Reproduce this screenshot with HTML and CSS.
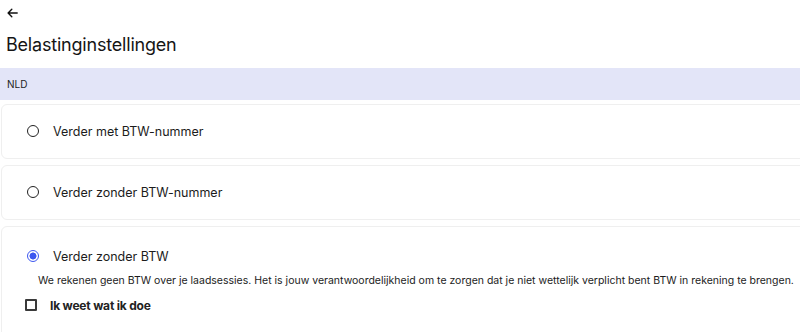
FILE: index.html
```html
<!DOCTYPE html>
<html lang="nl">
<head>
<meta charset="utf-8">
<title>Belastinginstellingen</title>
<link rel="stylesheet" href="styles.css">
</head>
<body>
<header class="header">
  <button class="back" aria-label="Terug">
    <svg width="11" height="10" viewBox="0 0 11 10" fill="none" stroke="#111" stroke-width="1.4" stroke-linecap="round" stroke-linejoin="round">
      <path d="M10.2 5H1.2M4.8 1.3L1.1 5 4.8 8.7"/>
    </svg>
  </button>
  <h1 class="title">Belastinginstellingen</h1>
</header>
<div class="country">NLD</div>
<div class="options">
  <div class="card">
    <label class="option">
      <span class="radio"></span>
      <span class="option-label">Verder met BTW-nummer</span>
    </label>
  </div>
  <div class="card">
    <label class="option">
      <span class="radio"></span>
      <span class="option-label">Verder zonder BTW-nummer</span>
    </label>
  </div>
  <div class="card card-open">
    <label class="option">
      <span class="radio radio-on"></span>
      <span class="option-label">Verder zonder BTW</span>
    </label>
    <p class="note">We rekenen geen BTW over je laadsessies. Het is jouw verantwoordelijkheid om te zorgen dat je niet wettelijk verplicht bent BTW in rekening te brengen.</p>
    <label class="check">
      <span class="box"></span>
      <span class="check-label">Ik weet wat ik doe</span>
    </label>
  </div>
</div>
</body>
</html>
```
FILE: styles.css
```css
html, body {
  margin: 0;
  padding: 0;
  background: #ffffff;
  overflow: hidden;
}
body {
  font-family: Inter, "Noto Sans", sans-serif;
  color: #1c1c1c;
  width: 800px;
}
.header {
  display: flex;
  flex-direction: column;
  align-items: flex-start;
}
.back {
  border: 0;
  background: none;
  padding: 0;
  margin: 8px 0 0 7px;
  width: 11px;
  height: 10px;
  display: flex;
}
.title {
  margin: 15px 0 0 6px;
  font-size: 18px;
  font-weight: 400;
  letter-spacing: -0.2px;
  line-height: 24px;
  color: #151515;
}
.country {
  margin-top: 11px;
  height: 32px;
  background: #e3e5f8;
  display: flex;
  align-items: center;
  padding-left: 7px;
  font-size: 10px;
  color: #222;
}
.options {
  display: flex;
  flex-direction: column;
  gap: 6px;
  margin: 4px -10px 0 1px;
}
.card {
  border: 1px solid #efefef;
  border-radius: 6px;
  padding: 14px 25px 15px;
}
.card-open {
  padding-top: 17px;
  padding-bottom: 30px;
}
.option {
  display: flex;
  align-items: center;
  gap: 14px;
  height: 24px;
}
.radio {
  width: 12px;
  height: 12px;
  box-sizing: border-box;
  border: 1.6px solid #222;
  border-radius: 50%;
  flex: none;
}
.radio-on {
  border-color: #3d57f0;
  background: radial-gradient(circle, #3d57f0 0 3.2px, #fff 3.8px);
}
.option-label {
  font-size: 12.5px;
  color: #1c1c1c;
}
.note {
  margin: 5px 0 0 11px;
  font-size: 10.5px;
  line-height: 16px;
  white-space: nowrap;
  color: #1c1c1c;
}
.check {
  display: flex;
  align-items: center;
  gap: 13px;
  margin: 9px 0 0 -2px;
  height: 14px;
}
.box {
  width: 12px;
  height: 12px;
  box-sizing: border-box;
  border: 2px solid #3a3a3a;
  border-radius: 1px;
  flex: none;
}
.check-label {
  font-size: 12px;
  font-weight: 700;
  letter-spacing: -0.2px;
  color: #222;
}
```
